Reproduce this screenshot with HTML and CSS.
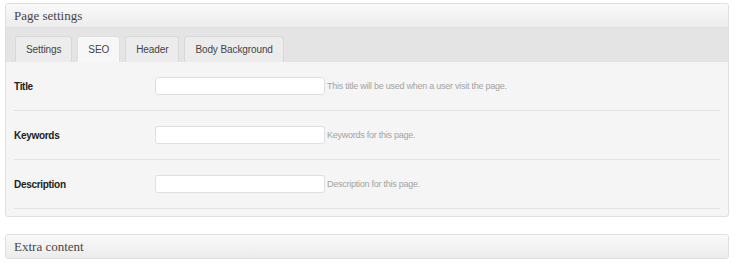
FILE: index.html
```html
<!DOCTYPE html>
<html>
<head>
  <title>Page settings</title>
  <link rel="stylesheet" href="styles.css">
</head>
<body>
  <div class="postbox">
    <h3 class="postbox-title">Page settings</h3>
    <div class="tabs">
      <a class="tab">Settings</a>
      <a class="tab active">SEO</a>
      <a class="tab">Header</a>
      <a class="tab">Body Background</a>
    </div>
    <div class="tab-panel">
      <div class="field-row">
        <label class="field-label">Title</label>
        <input type="text" class="field-input">
        <span class="field-hint">This title will be used when a user visit the page.</span>
      </div>
      <div class="field-row">
        <label class="field-label">Keywords</label>
        <input type="text" class="field-input">
        <span class="field-hint">Keywords for this page.</span>
      </div>
      <div class="field-row">
        <label class="field-label">Description</label>
        <input type="text" class="field-input">
        <span class="field-hint">Description for this page.</span>
      </div>
    </div>
  </div>

  <div class="postbox closed">
    <h3 class="postbox-title">Extra content</h3>
  </div>
</body>
</html>
```

FILE: styles.css
```css
body {
  margin: 0;
  padding: 3px 11px 0 5px;
  background: #fff;
  font-family: 'Liberation Sans', Arial, sans-serif;
  font-size: 11px;
  color: #333;
}
.postbox {
  border: 1px solid #dfdfdf;
  border-radius: 3px;
  background: #f5f5f5;
  box-shadow: 0 1px 0 #fff inset;
  overflow: hidden;
}
.postbox.closed {
  margin-top: 17px;
}
.postbox-title {
  margin: 0;
  height: 23px;
  line-height: 24px;
  padding: 0 8px;
  font-family: 'Liberation Serif', Georgia, serif;
  font-size: 13px;
  font-weight: normal;
  color: #464646;
  background: linear-gradient(to bottom, #f9f9f9, #ececec);
  border-bottom: 1px solid #dfdfdf;
}
.postbox.closed .postbox-title {
  border-bottom: none;
  height: 23px;
}
.tabs {
  display: flex;
  gap: 5px;
  padding: 8px 9px 0;
  background: #e4e4e4;
}
.tab {
  display: block;
  height: 25px;
  line-height: 26px;
  padding: 0 10px;
  border: 1px solid #d8d8d8;
  border-bottom: none;
  border-radius: 3px 3px 0 0;
  background: #ececec;
  color: #444;
  font-size: 10px;
  letter-spacing: -0.1px;
  cursor: pointer;
}
.tab.active {
  background: #f7f7f7;
  border-color: #dfdfdf;
}
.tab-panel {
  padding: 0 8px 7px;
}
.field-row {
  display: flex;
  align-items: center;
  padding: 15px 0;
  border-bottom: 1px solid #e2e2e2;
}
.field-label {
  width: 141px;
  font-size: 10px;
  font-weight: bold;
  letter-spacing: -0.3px;
  color: #222;
}
.field-input {
  box-sizing: border-box;
  width: 170px;
  height: 18px;
  margin: 0;
  padding: 0 4px;
  border: 1px solid #dfdfdf;
  border-radius: 3px;
  background: #fff;
  font: inherit;
}
.field-hint {
  margin-left: 2px;
  font-size: 9px;
  letter-spacing: -0.25px;
  color: #a3a3a3;
}
```
